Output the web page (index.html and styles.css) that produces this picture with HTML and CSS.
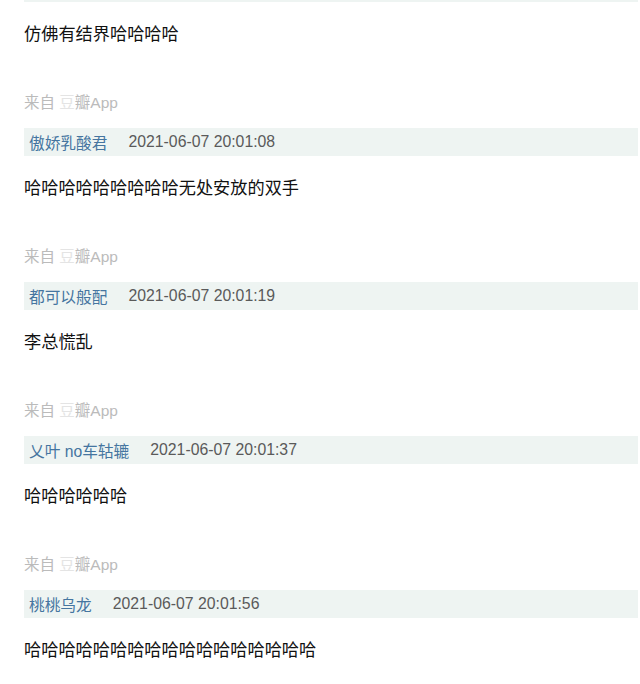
FILE: index.html
```html
<!DOCTYPE html>
<html lang="zh-CN">
<head>
    <meta charset="UTF-8">
    <meta name="viewport" content="width=device-width, initial-scale=1.0">
    <title>评论</title>
    <link rel="stylesheet" href="styles.css">
</head>
<body>
    <div class="comment-list">
        <div class="comment">
            <div class="meta"></div>
            <p class="content">仿佛有结界哈哈哈哈</p>
            <p class="source">来自 <span class="blur">豆</span>瓣App</p>
        </div>
        <div class="comment">
            <div class="meta">
                <span class="author">傲娇乳酸君</span>
                <span class="time">2021-06-07 20:01:08</span>
            </div>
            <p class="content">哈哈哈哈哈哈哈哈哈无处安放的双手</p>
            <p class="source">来自 <span class="blur">豆</span>瓣App</p>
        </div>
        <div class="comment">
            <div class="meta">
                <span class="author">都可以般配</span>
                <span class="time">2021-06-07 20:01:19</span>
            </div>
            <p class="content">李总慌乱</p>
            <p class="source">来自 <span class="blur">豆</span>瓣App</p>
        </div>
        <div class="comment">
            <div class="meta">
                <span class="author">乂叶 no车轱辘</span>
                <span class="time">2021-06-07 20:01:37</span>
            </div>
            <p class="content">哈哈哈哈哈哈</p>
            <p class="source">来自 <span class="blur">豆</span>瓣App</p>
        </div>
        <div class="comment">
            <div class="meta">
                <span class="author">桃桃乌龙</span>
                <span class="time">2021-06-07 20:01:56</span>
            </div>
            <p class="content">哈哈哈哈哈哈哈哈哈哈哈哈哈哈哈哈哈</p>
        </div>
    </div>
</body>
</html>
```

FILE: styles.css
```css
* {
    margin: 0;
    padding: 0;
    box-sizing: border-box;
}

body {
    background: #fff;
    font-family: "Liberation Sans", "Noto Sans CJK SC", sans-serif;
}

.comment-list {
    margin-top: -26px;
    padding-left: 24px;
    padding-right: 2px;
}

.meta {
    display: flex;
    align-items: center;
    gap: 21px;
    height: 28px;
    padding-left: 5px;
    background: #eef4f2;
}

.author {
    font-size: 15.7px;
    color: #4575a0;
}

.time {
    font-size: 15.8px;
    color: #5a5a5a;
}

.content {
    margin-top: 20px;
    height: 24px;
    line-height: 24px;
    font-size: 17.2px;
    color: #111;
}

.source {
    margin-top: 47px;
    margin-bottom: 15px;
    height: 20px;
    line-height: 20px;
    font-size: 15.5px;
    color: #bbb;
}

.blur {
    color: #e4e4e4;
}
```
